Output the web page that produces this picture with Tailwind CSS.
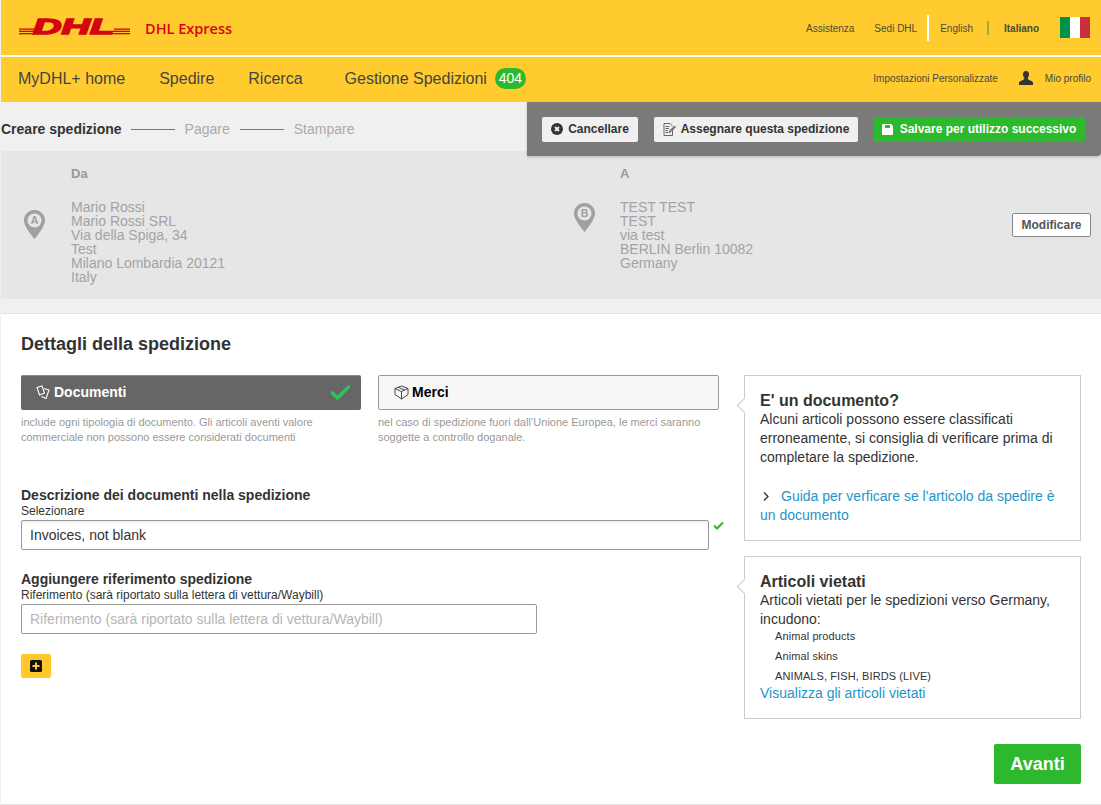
<!DOCTYPE html>
<html lang="it">
<head>
    <meta charset="UTF-8">
    <meta name="viewport" content="width=device-width, initial-scale=1.0">
    <title>MyDHL+ Creare spedizione</title>
    <script src="https://cdn.jsdelivr.net/npm/@tailwindcss/browser@4"></script>
</head>
<body class="bg-[#f0f0f0] text-[#333] font-['Liberation_Sans',Arial,sans-serif]">
<div class="h-[805px] w-[1101px] overflow-hidden pl-px">

    <!-- Header -->
    <header class="bg-[#ffcb2f]">
        <div class="flex h-[55px] items-center pl-[18px]">
            <svg width="111" height="28" viewBox="0 -6 111 28" class="mb-[3px]">
                <g fill="#d40511">
                    <rect x="0" y="10.500" width="16" height="1.300"/>
                    <rect x="0" y="12.700" width="15" height="1.300"/>
                    <rect x="0" y="15" width="14" height="1.300"/>
                    <rect x="95" y="10.500" width="16" height="1.300"/>
                    <rect x="94" y="12.700" width="17" height="1.300"/>
                    <rect x="93" y="15" width="18" height="1.300"/>
                </g>
                <text x="14" y="16.300" textLength="81" lengthAdjust="spacingAndGlyphs" fill="#d40511" stroke="#d40511" stroke-width="1.500" font-family="Liberation Sans" font-size="22" font-weight="700" font-style="italic">DHL</text>
            </svg>
            <span class="ml-[15px] mt-[3px] font-['Open_Sans'] text-[14.500px] font-semibold text-[#d40511]">DHL Express</span>
            <div class="ml-auto flex items-center pr-[11px] text-[10px] text-[#4a4a3a]">
                <a class="translate-y-px">Assistenza</a>
                <a class="ml-[20px] translate-y-px">Sedi DHL</a>
                <span class="ml-[10px] h-[26px] w-[2px] bg-white"></span>
                <a class="ml-[11px] translate-y-px">English</a>
                <span class="ml-[14px] h-[14px] w-[2px] bg-[#a5a93a]"></span>
                <a class="ml-[15px] translate-y-px font-bold">Italiano</a>
                <span class="ml-[21px] flex h-[21px] w-[30px]">
                    <span class="flex-1 bg-[#009246]"></span>
                    <span class="flex-1 bg-white"></span>
                    <span class="flex-1 bg-[#c92f3c]"></span>
                </span>
            </div>
        </div>
        <div class="h-[2px] bg-white"></div>
        <nav class="flex h-[45px] items-center pb-[2px] pl-[17px] pr-[10px] text-[16px] text-[#444]">
            <a>MyDHL+ home</a>
            <a class="ml-[34px]">Spedire</a>
            <a class="ml-[34px]">Ricerca</a>
            <a class="ml-[42px]">Gestione Spedizioni</a>
            <span class="ml-[8px] flex h-[21px] w-[31px] items-center justify-center rounded-full bg-[#2db92d] text-[14px] text-white">404</span>
            <a class="ml-auto text-[10px] text-[#4a4a3a]">Impostazioni Personalizzate</a>
            <svg width="14" height="14" viewBox="0 0 14 14" class="ml-[21px] -translate-y-px" fill="#333">
                <path d="M7 0C5 0 4 1.400 4 3.200C4 5 4.700 6.300 5.300 7C5.500 8 4.800 8.700 3.400 9.200C1.800 9.800 .3 10.400 0 11.500V14H14V11.500C13.700 10.400 12.200 9.800 10.600 9.200C9.200 8.700 8.500 8 8.700 7C9.300 6.300 10 5 10 3.200C10 1.400 9 0 7 0Z"/>
            </svg>
            <a class="ml-[12px] text-[10px] text-[#4a4a3a]">Mio profilo</a>
        </nav>
    </header>

    <!-- Steps and actions -->
    <div class="relative z-10 -mb-[5px] flex h-[54px]">
        <div class="flex h-[49px] w-[526px] items-center pt-[5px] text-[14px] text-[#aaa]">
            <span class="font-bold text-[#333]">Creare spedizione</span>
            <span class="ml-[9px] mr-[10px] h-px w-[44px] bg-[#777]"></span>
            <span>Pagare</span>
            <span class="mx-[10px] h-px w-[44px] bg-[#777]"></span>
            <span>Stampare</span>
        </div>
        <div class="flex flex-1 items-center rounded-br-[4px] bg-[#7a7a7a] pl-[15px] shadow-[0_1px_3px_rgba(0,0,0,0.2)]">
            <button class="flex h-[25px] w-[96px] items-center justify-center gap-[5px] rounded-[2px] bg-[#f0f0f0] text-[12px] font-bold text-[#333]">
                <svg width="12" height="12" viewBox="0 0 12 12">
                    <circle cx="6" cy="6" r="6" fill="#333"/>
                    <path d="M4 4L8 8M8 4L4 8" stroke="#f0f0f0" stroke-width="1.800"/>
                </svg>
                Cancellare
            </button>
            <button class="ml-[16px] flex h-[25px] w-[204px] items-center justify-center gap-[5px] rounded-[2px] bg-[#f0f0f0] text-[12px] font-bold text-[#333]">
                <svg width="13" height="13" viewBox="0 0 13 13" fill="none" stroke="#666">
                    <path d="M9.500 5V12.500H1V.5H7L9.500 3"/>
                    <path d="M2.500 3.500H6.500M2.500 5.500H6M2.500 7.500H5M2.500 9.500H5"/>
                    <path d="M6 10L7 7.500L11.500 3L12.500 4L8 8.500Z" fill="#888"/>
                </svg>
                Assegnare questa spedizione
            </button>
            <button class="ml-[15px] flex h-[25px] w-[212px] items-center justify-center gap-[7px] rounded-[2px] bg-[#2db92d] text-[12px] font-bold text-white">
                <svg width="11" height="11" viewBox="0 0 11 11">
                    <path d="M0 1A1 1 0 0 1 1 0H9L11 2V10A1 1 0 0 1 10 11H1A1 1 0 0 1 0 10Z" fill="#fff"/>
                    <rect x="3" y="1" width="5" height="3" fill="#2db92d"/>
                </svg>
                Salvare per utilizzo successivo
            </button>
        </div>
    </div>

    <!-- Addresses -->
    <section class="flex h-[148px] bg-[#e6e6e6] text-[#a3a3a3]">
        <div class="flex w-[549px] items-start pl-[23px] pt-[15px]">
            <div class="flex items-center">
                <svg width="21" height="29" viewBox="0 0 21 29" class="-mt-[2px] w-[21px]">
                    <path d="M10.500 0C4.700 0 0 4.500 0 10.300C0 16.500 6.500 24 10.500 29C14.500 24 21 16.500 21 10.300C21 4.500 16.300 0 10.500 0Z" fill="#a0a0a0"/>
                    <circle cx="10.500" cy="10.500" r="7" fill="#e6e6e6"/>
                    <text x="10.500" y="14.300" text-anchor="middle" font-size="10.500" font-weight="700" fill="#a0a0a0" font-family="Liberation Sans">A</text>
                </svg>
                <div class="ml-[26px]">
                    <h3 class="text-[13px] font-bold leading-[15px] text-[#999]">Da</h3>
                    <p class="mt-[19px] text-[14px] leading-[14px]">Mario Rossi<br>Mario Rossi SRL<br>Via della Spiga, 34<br>Test<br>Milano Lombardia 20121<br>Italy</p>
                </div>
            </div>
        </div>
        <div class="flex flex-1 items-start pl-[24px] pr-[10px] pt-[15px]">
            <div class="flex items-center">
                <svg width="21" height="29" viewBox="0 0 21 29" class="-mt-[2px] w-[21px]">
                    <path d="M10.500 0C4.700 0 0 4.500 0 10.300C0 16.500 6.500 24 10.500 29C14.500 24 21 16.500 21 10.300C21 4.500 16.300 0 10.500 0Z" fill="#a0a0a0"/>
                    <circle cx="10.500" cy="10.500" r="7" fill="#e6e6e6"/>
                    <text x="10.500" y="14.300" text-anchor="middle" font-size="10.500" font-weight="700" fill="#a0a0a0" font-family="Liberation Sans">B</text>
                </svg>
                <div class="ml-[25px]">
                    <h3 class="text-[13px] font-bold leading-[15px] text-[#999]">A</h3>
                    <p class="mt-[19px] text-[14px] leading-[14px]">TEST TEST<br>TEST<br>via test<br>BERLIN Berlin 10082<br>Germany</p>
                </div>
            </div>
            <button class="ml-auto mt-[47px] h-[24px] w-[79px] rounded-[2px] border border-[#888] bg-white text-[12px] font-bold text-[#555]">Modificare</button>
        </div>
    </section>

    <!-- Shipment details -->
    <main class="mt-[14px] h-[492px] border-y border-[#e3e3e3] bg-white px-[20px] pt-[20px]">
        <h2 class="text-[18px] font-bold leading-[21px] text-[#333]">Dettagli della spedizione</h2>
        <div class="mt-[20px] flex gap-[25px]">
            <div class="w-[698px]">
                <div class="grid grid-cols-[340px_341px] gap-[17px]">
                    <div>
                        <div class="flex h-[35px] items-center rounded-[2px] border-t border-[#888] bg-[#666] pb-[2px] pl-[15px] pr-[10px] text-[14px] font-bold text-white">
                            <svg width="15" height="15" viewBox="0 0 15 15" fill="none" stroke="#fff" stroke-width="1.100">
                                <path d="M1 2.500L6 1L8.500 8L3.500 10Z"/>
                                <path d="M8 3.500L13 5L10 13.500L5.500 11.500"/>
                            </svg>
                            <span class="ml-[3px]">Documenti</span>
                            <svg width="21" height="16" viewBox="0 0 21 16" class="ml-auto" fill="none" stroke="#2fc45a" stroke-width="3.400">
                                <path d="M1.500 8L7.500 14L19.500 2"/>
                            </svg>
                        </div>
                        <p class="mt-[5px] text-[11px] leading-[15px] text-[#999]">include ogni tipologia di documento. Gli articoli aventi valore commerciale non possono essere considerati documenti</p>
                    </div>
                    <div>
                        <div class="flex h-[35px] items-center rounded-[2px] border border-[#999] bg-[#f7f7f7] pl-[15px] text-[14px] font-bold text-black">
                            <svg width="15" height="15" viewBox="0 0 15 15" fill="none" stroke="#333" stroke-width="0.900">
                                <path d="M7.500 1L14 3.500V9.500L7.500 14L1 9.500V3.500Z"/>
                                <path d="M1 3.500L7.500 6.500L14 3.500M7.500 6.500V14M4 2.300L10.500 5"/>
                            </svg>
                            <span class="ml-[3px]">Merci</span>
                        </div>
                        <p class="mt-[5px] text-[11px] leading-[15px] text-[#999]">nel caso di spedizione fuori dall’Unione Europea, le merci saranno soggette a controllo doganale.</p>
                    </div>
                </div>

                <h4 class="mt-[42px] text-[14px] font-bold leading-[16px]">Descrizione dei documenti nella spedizione</h4>
                <label class="block text-[12px] leading-[16px]">Selezionare</label>
                <div class="mt-px flex items-start">
                    <input value="Invoices, not blank" class="h-[30px] w-[688px] shrink-0 rounded-[2px] border border-[#999] px-[8px] text-[14px] text-[#333] shadow-[inset_0_2px_2px_rgba(0,0,0,0.06)]">
                    <svg width="11" height="9" viewBox="0 0 11 9" class="ml-[4px] mt-px shrink-0" fill="none" stroke="#2db92d" stroke-width="2">
                        <path d="M1 4.500L4 7.500L10 1.500"/>
                    </svg>
                </div>

                <h4 class="mt-[21px] text-[14px] font-bold leading-[16px]">Aggiungere riferimento spedizione</h4>
                <label class="block text-[12px] leading-[16px]">Riferimento (sarà riportato sulla lettera di vettura/Waybill)</label>
                <input placeholder="Riferimento (sarà riportato sulla lettera di vettura/Waybill)" class="mt-px h-[30px] w-[516px] rounded-[2px] border border-[#999] px-[8px] text-[14px] placeholder:text-[#b5b5b5]">

                <button class="mt-[20px] flex h-[24px] w-[30px] items-center justify-center rounded-[2px] bg-[#ffc72c]">
                    <svg width="12" height="12" viewBox="0 0 12 12">
                        <rect width="12" height="12" rx="1.500" fill="#111"/>
                        <path d="M6 2.500V9.500M2.500 6H9.500" stroke="#ffc72c" stroke-width="2"/>
                    </svg>
                </button>
            </div>

            <aside class="flex w-[337px] flex-col gap-[15px] text-[14px] leading-[19px]">
                <div class="relative h-[166px] border border-[#ccc] px-[15px] pt-[16px]">
                    <span class="absolute -left-[6px] top-[24px] size-[11px] rotate-45 border-b border-l border-[#ccc] bg-white"></span>
                    <h3 class="text-[16px] font-bold leading-[18px]">E' un documento?</h3>
                    <p>Alcuni articoli possono essere classificati erroneamente, si consiglia di verificare prima di completare la spedizione.</p>
                    <p class="mt-[20px] text-[#1f94c8]">
                        <svg width="6" height="9" viewBox="0 0 6 9" class="ml-[3px] mr-[12px] inline align-baseline" fill="none" stroke="#333" stroke-width="1.300">
                            <path d="M1 .5L5 4.500L1 8.500"/>
                        </svg>Guida per verficare se l'articolo da spedire è un documento
                    </p>
                </div>
                <div class="relative h-[163px] border border-[#ccc] px-[15px] pt-[16px]">
                    <span class="absolute -left-[6px] top-[24px] size-[11px] rotate-45 border-b border-l border-[#ccc] bg-white"></span>
                    <h3 class="text-[16px] font-bold leading-[18px]">Articoli vietati</h3>
                    <p>Articoli vietati per le spedizioni verso Germany, incudono:</p>
                    <ul class="-mt-[3px] pl-[15px] text-[11px] leading-[20px] tracking-[0.1px]">
                        <li>Animal products</li>
                        <li>Animal skins</li>
                        <li>ANIMALS, FISH, BIRDS (LIVE)</li>
                    </ul>
                    <a class="-mt-[2px] block text-[#1f94c8]">Visualizza gli articoli vietati</a>
                </div>
            </aside>
        </div>
        <div class="mt-[25px] flex justify-end">
            <button class="h-[40px] w-[87px] rounded-[2px] bg-[#2db92d] text-[18px] font-bold text-white">Avanti</button>
        </div>
    </main>
</div>
</body>
</html>
